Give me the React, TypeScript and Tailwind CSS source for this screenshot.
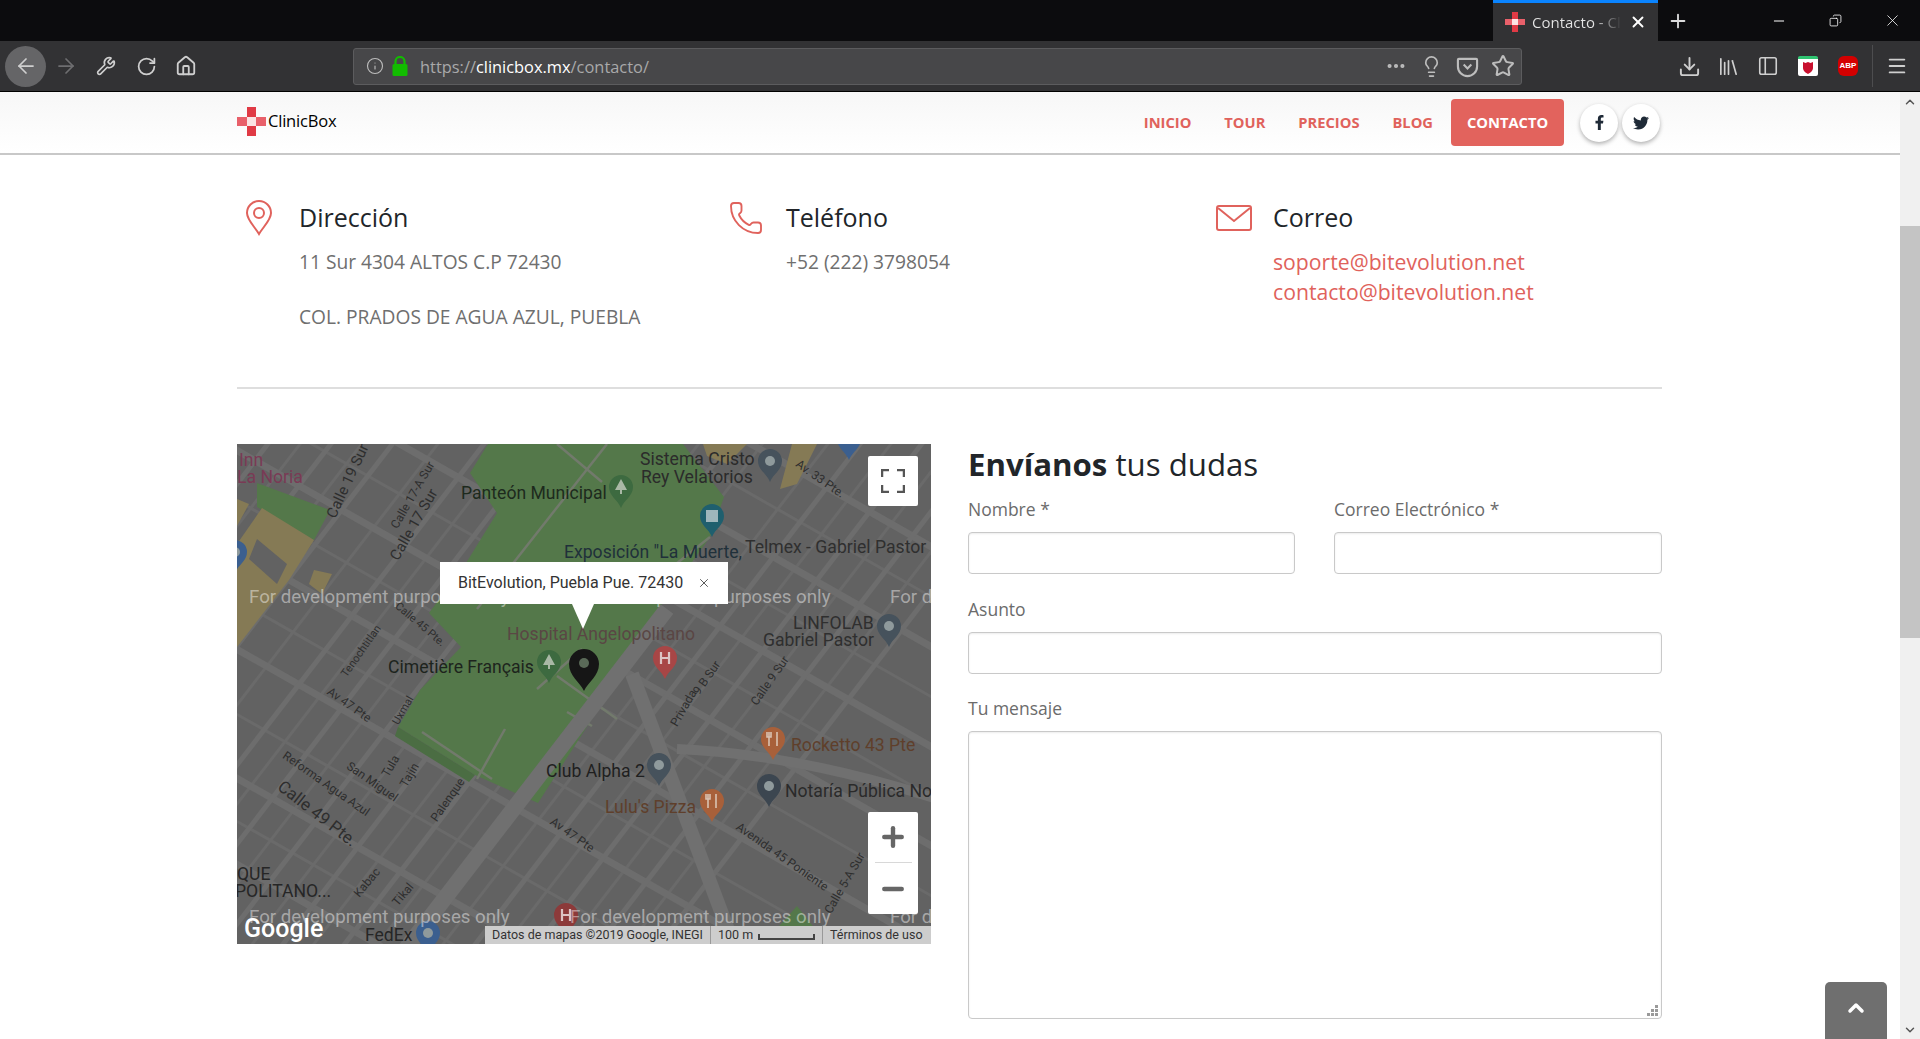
import { ArrowLeft, ArrowRight, Wrench, RotateCw, Home, Info, Ellipsis, Lightbulb, Star, Download, Library, PanelLeft, Menu, X, Plus, Minus, Copy, ChevronUp, ChevronDown, Phone } from "lucide-react";
import { FaFacebookF, FaTwitter } from "react-icons/fa";

const aRoads = [-293, -193, -93, 6, 106, 205, 334, 420];
const bRoads = [40, 122, 202, 321, 400, 480, 560, 640, 810, 890, 970, 1050];
const minorA = [-243, -143, -43, 56, 156, 270, 377];
const minorB = [82, 162, 261, 360, 440, 520, 600, 683, 768, 850, 930, 1010];

const labels = [
  { t: "Inn", x: 2, y: 22, c: "#7a3a55" },
  { t: "La Noria", x: 0, y: 39, c: "#7a3a55" },
  { t: "Sistema Cristo", x: 403, y: 21, c: "#2b2b2b" },
  { t: "Rey Velatorios", x: 404, y: 39, c: "#2b2b2b" },
  { t: "Panteón Municipal", x: 224, y: 55, c: "#1d2a1d" },
  { t: 'Exposición "La Muerte,', x: 327, y: 114, c: "#20303a" },
  { t: "Telmex - Gabriel Pastor", x: 508, y: 109, c: "#2f2f2f" },
  { t: "Hospital Angelopolitano", x: 270, y: 196, c: "#5a4644" },
  { t: "LINFOLAB", x: 556, y: 185, c: "#2f2f2f" },
  { t: "Gabriel Pastor", x: 526, y: 202, c: "#2f2f2f" },
  { t: "Cimetière Français", x: 151, y: 229, c: "#1d241d" },
  { t: "Club Alpha 2", x: 309, y: 333, c: "#1f1f1f" },
  { t: "Rocketto 43 Pte", x: 554, y: 307, c: "#5f3f2b" },
  { t: "Notaría Pública No", x: 548, y: 353, c: "#2a2a2a" },
  { t: "Lulu's Pizza", x: 368, y: 369, c: "#5f3f2b" },
  { t: "QUE", x: 0, y: 436, c: "#262626" },
  { t: "POLITANO...", x: -2, y: 453, c: "#262626" },
  { t: "FedEx", x: 128, y: 497, c: "#262626" },
];

const streets = [
  { t: "Calle 19 Sur", x: 115, y: 39, r: -65, s: 15 },
  { t: "Calle 17-A Sur", x: 179, y: 53, r: -60, s: 12 },
  { t: "Calle 17 Sur", x: 181, y: 83, r: -60, s: 15 },
  { t: "Av. 33 Pte.", x: 581, y: 38, r: 35, s: 12 },
  { t: "Tenochtitlan", x: 127, y: 209, r: -55, s: 11 },
  { t: "Calle 45 Pte.", x: 181, y: 183, r: 40, s: 11 },
  { t: "Av 47 Pte", x: 110, y: 264, r: 35, s: 12 },
  { t: "Uxmal", x: 169, y: 268, r: -60, s: 11 },
  { t: "Reforma Agua Azul", x: 87, y: 343, r: 35, s: 12 },
  { t: "San Miguel", x: 133, y: 341, r: 35, s: 12 },
  { t: "Tula", x: 157, y: 324, r: -60, s: 12 },
  { t: "Tajín", x: 176, y: 333, r: -60, s: 12 },
  { t: "Palenque", x: 214, y: 358, r: -55, s: 12 },
  { t: "Calle 49 Pte.", x: 77, y: 374, r: 38, s: 17 },
  { t: "Kabac", x: 133, y: 441, r: -50, s: 12 },
  { t: "Tikal", x: 169, y: 453, r: -50, s: 12 },
  { t: "Av 47 Pte", x: 333, y: 394, r: 35, s: 12 },
  { t: "Avenida 45 Poniente", x: 543, y: 416, r: 35, s: 12 },
  { t: "Calle 5-A Sur", x: 611, y: 441, r: -60, s: 12 },
  { t: "Privada", x: 450, y: 266, r: -60, s: 12 },
  { t: "9 B Sur", x: 473, y: 236, r: -55, s: 12 },
  { t: "Calle 9 Sur", x: 536, y: 239, r: -55, s: 12 },
];

const pins = [
  { x: 533, y: 38, c: "#46525c", k: "dot" },
  { x: 384, y: 64, c: "#3d6a40", k: "tree" },
  { x: 475, y: 93, c: "#1f5f6e", k: "museum" },
  { x: 652, y: 203, c: "#46525c", k: "dot" },
  { x: 312, y: 239, c: "#3d6a40", k: "tree" },
  { x: 428, y: 235, c: "#a84646", k: "h" },
  { x: 422, y: 342, c: "#46525c", k: "dot" },
  { x: 536, y: 316, c: "#a8603a", k: "food" },
  { x: 475, y: 378, c: "#a8603a", k: "food" },
  { x: 532, y: 363, c: "#3c4650", k: "dot" },
  { x: -2, y: 129, c: "#3b5f8f", k: "dot" },
  { x: 191, y: 510, c: "#3b5f8f", k: "dot" },
  { x: 612, y: 16, c: "#3b5f8f", k: "dot" },
  { x: 329, y: 492, c: "#8c3a3a", k: "h" },
];

function Cross({ big }: { big?: boolean }) {
  return (
    <div className={big ? "grid grid-cols-3 w-[29px] h-[29px] shrink-0" : "grid grid-cols-3 w-[20px] h-[20px] shrink-0"}>
      <div />
      <div className="bg-[#e03a45]" />
      <div />
      <div className="bg-[#e8606a]" />
      <div className="bg-[#fbe3e3]" />
      <div className="bg-[#e8606a]" />
      <div />
      <div className="bg-[#e03a45]" />
      <div />
    </div>
  );
}

function PinGlyph({ x, y, k }: { x: number; y: number; k: string }) {
  const cy = y - 21;
  if (k === "tree") return <path d={`M${x} ${cy - 8}l6 11h-5v4h-2v-4h-5z`} fill="#a9b8a6" />;
  if (k === "museum") return <rect x={x - 6} y={cy - 6} width="12" height="12" fill="#9fb6bc" />;
  if (k === "food") return <path d={`M${x - 4} ${cy - 7}v14M${x + 4} ${cy - 7}v14M${x - 6} ${cy - 7}v5h4v-5`} stroke="#d9c2b2" strokeWidth="1.6" fill="none" />;
  if (k === "h") return <path d={`M${x - 4} ${cy - 6}v12M${x + 4} ${cy - 6}v12M${x - 4} ${cy}h8`} stroke="#dcc4c4" strokeWidth="2.2" fill="none" />;
  return <circle cx={x} cy={cy} r="5" fill="#8f9a9c" />;
}

function MapDrawing() {
  return (
    <svg viewBox="0 0 694 500" className="w-full h-full block font-[Roboto,sans-serif]">
      <rect width="694" height="500" fill="#626262" />
      {minorA.map((c) => (
        <line key={c} x1="-20" y1={c - 11} x2="714" y2={c + 407} stroke="#6a6a6a" strokeWidth="3" />
      ))}
      {minorB.map((d) => (
        <line key={d} x1={(d + 20) / 1.3} y1="-20" x2={(d - 520) / 1.3} y2="520" stroke="#6a6a6a" strokeWidth="3" />
      ))}
      {aRoads.map((c) => (
        <line key={c} x1="-20" y1={c - 11} x2="714" y2={c + 407} stroke="#6d6d6d" strokeWidth="7" />
      ))}
      {bRoads.map((d) => (
        <line key={d} x1={(d + 20) / 1.3} y1="-20" x2={(d - 520) / 1.3} y2="520" stroke="#6d6d6d" strokeWidth="5" />
      ))}
      <polygon points="20,39 93,66 77,96 20,63" fill="#54784a" />
      <polygon points="25,64 77,96 52,136 0,203 0,100" fill="#857a55" />
      <polygon points="20,95 50,120 40,140 12,115" fill="#626262" />
      <polygon points="0,55 12,60 0,82" fill="#857a55" />
      <polygon points="77,126 95,130 85,150 72,140" fill="#857a55" />
      <polygon points="466,0 510,0 490,20 470,12" fill="#857a55" />
      <polygon points="555,0 580,0 560,40 543,45" fill="#857a55" />
      <polygon points="251,0 446,0 487,53 473,93 423,163 369,253 301,359 238,331 161,283 183,246 224,203 192,169 229,119 260,69 233,29" fill="#54784a" />
      <polygon points="161,283 238,331 232,338 158,292" fill="#4b6d43" />
      <polygon points="535,490 560,462 590,500 535,500" fill="#54784a" />
      <g stroke="#727a6c" strokeWidth="2.5" fill="none">
        <line x1="370" y1="0" x2="240" y2="165" />
        <line x1="320" y1="0" x2="365" y2="38" />
        <line x1="473" y1="93" x2="420" y2="135" />
        <line x1="320" y1="232" x2="380" y2="275" />
        <line x1="300" y1="245" x2="345" y2="205" />
        <line x1="185" y1="288" x2="255" y2="335" />
        <line x1="268" y1="285" x2="240" y2="335" />
        <line x1="330" y1="268" x2="355" y2="282" />
      </g>
      <line x1="430" y1="165" x2="165" y2="510" stroke="#707070" strokeWidth="16" />
      <line x1="395" y1="230" x2="500" y2="510" stroke="#707070" strokeWidth="14" />
      <path d="M440 305Q560 310 700 355" stroke="#707070" strokeWidth="10" fill="none" />
      {streets.map((s) => (
        <text key={s.t + s.x} x={s.x} y={s.y} fontSize={s.s} fill="#2e2e2e" textAnchor="middle" transform={`rotate(${s.r} ${s.x} ${s.y})`}>
          {s.t}
        </text>
      ))}
      {pins.map((p) => (
        <g key={p.x + "-" + p.y}>
          <path d={`M${p.x} ${p.y}c-3 -8 -12 -12 -12 -21a12 12 0 1 1 24 0c0 9 -9 13 -12 21z`} fill={p.c} />
          <PinGlyph x={p.x} y={p.y} k={p.k} />
        </g>
      ))}
      <path d="M347 247c-4 -9 -15 -15 -15 -27a15 15 0 1 1 30 0c0 12 -11 18 -15 27z" fill="#161616" />
      <circle cx="347" cy="219" r="5" fill="#5a6a58" />
      {labels.map((l) => (
        <text key={l.t} x={l.x} y={l.y} fontSize="17.6" fill={l.c}>
          {l.t}
        </text>
      ))}
      {[[12, 159], [333, 159], [653, 159], [12, 479], [333, 479], [653, 479]].map(([x, y]) => (
        <text key={x + "-" + y} x={x} y={y} fontSize="18.7" fill="#ffffff" fillOpacity="0.45">
          For development purposes only
        </text>
      ))}
      <text x="7" y="493" fontSize="25" fontWeight="500" fill="#ffffff">Google</text>
    </svg>
  );
}

function GoogleMap() {
  return (
    <div className="relative w-[694px] h-[500px] overflow-hidden shrink-0">
      <MapDrawing />
      <div className="absolute left-[203px] top-[118px] w-[288px] h-[42px] bg-white flex items-center pl-[18px] pr-[17px] justify-between text-[16px] text-[#333] font-[Roboto,sans-serif]">
        <span className="whitespace-nowrap">BitEvolution, Puebla Pue. 72430</span>
        <X size={14} strokeWidth={1.5} className="text-[#444]" />
      </div>
      <div className="absolute left-[335px] top-[160px] w-0 h-0 border-l-[11px] border-r-[11px] border-t-[25px] border-l-transparent border-r-transparent border-t-white" />
      <div className="absolute left-[631px] top-[12px] w-[50px] h-[50px] bg-white rounded-[2px] flex items-center justify-center">
        <svg width="24" height="24" viewBox="0 0 24 24" fill="none" stroke="#555" strokeWidth="2.5">
          <path d="M1 8V1h7M16 1h7v7M23 16v7h-7M8 23H1v-7" />
        </svg>
      </div>
      <div className="absolute left-[631px] top-[368px] w-[50px] h-[102px] bg-white rounded-[2px] flex flex-col items-center">
        <div className="h-[50px] flex items-center justify-center">
          <Plus size={30} strokeWidth={3.5} className="text-[#666]" />
        </div>
        <div className="w-[37px] h-px bg-[#d8d8d8]" />
        <div className="h-[51px] flex items-center justify-center">
          <Minus size={30} strokeWidth={3.5} className="text-[#666]" />
        </div>
      </div>
      <div className="absolute right-0 bottom-0 h-[18px] w-[446px] bg-[#cdcdcd] flex items-center text-[12.5px] text-[#333] font-[Roboto,sans-serif] whitespace-nowrap">
        <span className="pl-[7px] w-[225px]">Datos de mapas ©2019 Google, INEGI</span>
        <div className="w-px h-full bg-[#999]" />
        <span className="pl-[7px] w-[47px]">100 m</span>
        <div className="w-[57px] h-[6px] border-2 border-t-0 border-[#444] mb-[-4px]" />
        <div className="w-px h-full bg-[#999] ml-[7px]" />
        <span className="pl-[7px]">Términos de uso</span>
      </div>
    </div>
  );
}

function BrowserChrome() {
  return (
    <div className="shrink-0">
      <div className="h-[41px] bg-[#0c0c0e] flex justify-end text-white">
        <div className="w-[165px] bg-[#323234] border-t-[3px] border-[#0a84ff] flex items-center pl-[12px] gap-[7px]">
          <Cross />
          <span className="w-[90px] overflow-hidden whitespace-nowrap text-[15px] font-['Open_Sans',sans-serif] bg-gradient-to-r from-[#e6e6e6] from-[68%] to-transparent bg-clip-text text-transparent">Contacto - Clinic</span>
          <X size={18} strokeWidth={2.5} />
        </div>
        <div className="w-[40px] flex items-center justify-center">
          <Plus size={22} strokeWidth={2} className="text-[#ddd]" />
        </div>
        <div className="w-[57px] flex items-center justify-center ml-[52px]">
          <Minus size={16} strokeWidth={1.5} />
        </div>
        <div className="w-[57px] flex items-center justify-center">
          <Copy size={13} strokeWidth={1.5} className="scale-x-[-1]" />
        </div>
        <div className="w-[56px] flex items-center justify-center">
          <X size={19} strokeWidth={1} />
        </div>
      </div>
      <div className="h-[51px] bg-[#323234] border-b border-black flex items-center text-[#cfcfcf] pl-[5px]">
        <div className="w-[41px] h-[41px] rounded-full bg-[#656567] flex items-center justify-center">
          <ArrowLeft size={24} strokeWidth={1.75} />
        </div>
        <div className="w-[40px] flex justify-center text-[#6e6e70]"><ArrowRight size={24} strokeWidth={1.75} /></div>
        <div className="w-[40px] flex justify-center"><Wrench size={20} strokeWidth={2} /></div>
        <div className="w-[40px] flex justify-center"><RotateCw size={21} strokeWidth={2} /></div>
        <div className="w-[40px] flex justify-center"><Home size={22} strokeWidth={2} /></div>
        <div className="ml-[147px] w-[1169px] h-[37px] bg-[#474749] border border-[#5c5c5e] rounded-[3px] flex items-center pl-[12px]">
          <Info size={18} strokeWidth={1.5} className="text-[#bdbdbd]" />
          <svg width="16" height="20" viewBox="0 0 16 20" className="ml-[8px]">
            <rect x="0.5" y="8" width="15" height="12" rx="1.5" fill="#12bc00" />
            <path d="M3.5 9V5.5a4.5 4.5 0 0 1 9 0V9" fill="none" stroke="#12bc00" strokeWidth="2.2" />
          </svg>
          <span className="ml-[12px] mt-[2px] text-[16.4px] text-[#a9a9aa] font-['Open_Sans',sans-serif] whitespace-nowrap">
            https://<span className="text-white">clinicbox.mx</span>/contacto/
          </span>
          <div className="ml-auto flex items-center text-[#bdbdbd]">
            <div className="w-[36px] flex justify-center"><Ellipsis size={22} strokeWidth={2.5} /></div>
            <div className="w-[35px] flex justify-center"><Lightbulb size={23} strokeWidth={1.75} /></div>
            <div className="w-[36px] flex justify-center">
              <svg width="23" height="23" viewBox="0 0 24 24" fill="none" stroke="currentColor" strokeWidth="2.2">
                <path d="M3 4h18a1 1 0 0 1 1 1v7a10 10 0 0 1-20 0V5a1 1 0 0 1 1-1z" />
                <path d="M8 10l4 4 4-4" />
              </svg>
            </div>
            <div className="w-[36px] flex justify-center"><Star size={24} strokeWidth={2} /></div>
          </div>
        </div>
        <div className="ml-[147px] flex items-center">
          <div className="w-[40px] flex justify-center"><Download size={23} strokeWidth={2} /></div>
          <div className="w-[39px] flex justify-center"><Library size={23} strokeWidth={1.75} /></div>
          <div className="w-[40px] flex justify-center"><PanelLeft size={22} strokeWidth={1.75} /></div>
          <div className="w-[40px] flex justify-center">
            <div className="w-[20px] h-[20px] bg-white border-t-[3px] border-[#2fc471] rounded-[2px] flex items-center justify-center">
              <svg width="12" height="13" viewBox="0 0 12 13"><path d="M1 1l2.5 1L6 1l2.5 1L11 1v6c0 3-3 5-5 6-2-1-5-3-5-6z" fill="#c8102e" /></svg>
            </div>
          </div>
          <div className="w-[40px] flex justify-center">
            <div className="w-[20px] h-[20px] rounded-[6px] bg-[#d40000] flex items-center justify-center text-white text-[8px] font-bold font-['Liberation_Sans',sans-serif]">ABP</div>
          </div>
          <div className="w-px h-[42px] bg-[#4d4d4f] ml-[4px]" />
          <div className="w-[47px] flex justify-center"><Menu size={22} strokeWidth={2} /></div>
        </div>
      </div>
    </div>
  );
}

function Field({ label, className }: { label: string; className?: string }) {
  return (
    <div className={className}>
      <label className="block h-[26px] leading-[26px] text-[17.5px] text-[#6b6b6b]">{label}</label>
      <input className="block mt-[10px] w-full h-[42px] bg-white border border-[#c9c9c9] rounded-[4px] shadow-[inset_0_1px_2px_rgba(0,0,0,0.08)] outline-none" />
    </div>
  );
}

export default function App() {
  return (
    <div className="h-[1039px] w-[1920px] overflow-hidden flex flex-col bg-white font-['Open_Sans',sans-serif] relative">
      <BrowserChrome />
      <div className="flex flex-1 min-h-0">
        <div className="w-[1900px]">
          <div className="h-[63px] bg-gradient-to-b from-[#f7f7f7] to-white border-b-2 border-[#c8c8c8] pl-[237px] pr-[240px] flex items-center">
            <div className="flex items-center gap-[2px] -mt-[2px]">
              <Cross big />
              <span className="text-[16.5px] text-black tracking-[-0.2px]">ClinicBox</span>
            </div>
            <nav className="ml-auto flex items-center text-[14.7px] font-bold text-[#e0625c]">
              <a className="mr-[33px]">INICIO</a>
              <a className="mr-[33px]">TOUR</a>
              <a className="mr-[33px]">PRECIOS</a>
              <a className="mr-[18px]">BLOG</a>
              <a className="w-[113px] h-[47px] bg-[#e2635d] text-white rounded-[4px] flex items-center justify-center">CONTACTO</a>
              <span className="ml-[16px] w-[38px] h-[38px] rounded-full bg-white shadow-[0_2px_4px_rgba(0,0,0,0.3)] flex items-center justify-center text-[#1f2a37]"><FaFacebookF size={15} /></span>
              <span className="ml-[4px] w-[38px] h-[38px] rounded-full bg-white shadow-[0_2px_4px_rgba(0,0,0,0.3)] flex items-center justify-center text-[#1f2a37]"><FaTwitter size={16} /></span>
            </nav>
          </div>

          <div className="pl-[237px] w-[1662px]">
            <div className="pt-[45px] pb-[55px] border-b-2 border-[#dedede] grid grid-cols-[487px_487px_1fr]">
              <div className="flex">
                <div className="w-[62px] shrink-0 pl-[8px]">
                  <svg width="28" height="36" viewBox="0 0 28 36" fill="none" stroke="#e0625c" strokeWidth="2">
                    <path d="M14 34C10 27 2 20 2 13a12 12 0 0 1 24 0c0 7-8 14-12 21z" />
                    <circle cx="14" cy="13" r="5" />
                  </svg>
                </div>
                <div>
                  <h3 className="h-[36px] leading-[35px] text-[25px] text-[#212529]">Dirección</h3>
                  <p className="mt-[11px] leading-[30px] text-[19.2px] text-[#6f6f6f]">11 Sur 4304 ALTOS C.P 72430</p>
                  <p className="mt-[25px] leading-[30px] text-[19.2px] text-[#6f6f6f]">COL. PRADOS DE AGUA AZUL, PUEBLA</p>
                </div>
              </div>
              <div className="flex">
                <div className="w-[62px] shrink-0 pl-[4px]">
                  <Phone size={36} strokeWidth={1.25} className="text-[#e0625c]" />
                </div>
                <div>
                  <h3 className="h-[36px] leading-[35px] text-[25px] text-[#212529]">Teléfono</h3>
                  <p className="mt-[11px] leading-[30px] text-[19.2px] text-[#6f6f6f]">+52 (222) 3798054</p>
                </div>
              </div>
              <div className="flex">
                <div className="w-[62px] shrink-0 pl-[5px]">
                  <svg width="36" height="36" viewBox="0 0 36 36" fill="none" stroke="#e0625c" strokeWidth="2">
                    <rect x="1" y="6" width="34" height="24" rx="2" />
                    <path d="M2 8l16 13L34 8" />
                  </svg>
                </div>
                <div>
                  <h3 className="h-[36px] leading-[35px] text-[25px] text-[#212529]">Correo</h3>
                  <a className="block mt-[11px] leading-[30px] text-[21.2px] text-[#e0625c]">soporte@bitevolution.net</a>
                  <a className="block leading-[30px] text-[21.2px] text-[#e0625c]">contacto@bitevolution.net</a>
                </div>
              </div>
            </div>

            <div className="mt-[55px] flex gap-[37px]">
              <GoogleMap />
              <form className="flex-1">
                <h2 className="h-[42px] leading-[40px] text-[31.2px] text-[#212529] whitespace-nowrap"><b className="font-bold">Envíanos</b> tus dudas</h2>
                <div className="mt-[10px] grid grid-cols-[327px_328px] gap-x-[39px]">
                  <Field label="Nombre *" />
                  <Field label="Correo Electrónico *" />
                </div>
                <Field label="Asunto" className="mt-[22px]" />
                <div className="mt-[21px]">
                  <label className="block h-[26px] leading-[26px] text-[17.5px] text-[#6b6b6b]">Tu mensaje</label>
                  <div className="relative mt-[10px]">
                    <textarea className="block w-full h-[288px] resize-none bg-white border border-[#c9c9c9] rounded-[4px] shadow-[inset_0_1px_2px_rgba(0,0,0,0.08)] outline-none" />
                    <svg width="12" height="12" viewBox="0 0 12 12" className="absolute right-[3px] bottom-[2px]" fill="#9a9a9a">
                      <path d="M8 0h3v3H8zM4 4h3v3H4zM8 4h3v3H8zM0 8h3v3H0zM4 8h3v3H4zM8 8h3v3H8z" />
                    </svg>
                  </div>
                </div>
              </form>
            </div>
          </div>
        </div>

        <div className="w-[20px] bg-[#f0f0f0] flex flex-col items-center">
          <div className="h-[19px] flex items-center justify-center"><ChevronUp size={14} strokeWidth={2.5} className="text-[#555]" /></div>
          <div className="mt-[115px] w-full h-[412px] bg-[#c4c4c4]" />
          <div className="mt-auto h-[19px] flex items-center justify-center"><ChevronDown size={14} strokeWidth={2.5} className="text-[#555]" /></div>
        </div>
      </div>

      <div className="absolute left-[1825px] top-[982px] w-[62px] h-[57px] bg-[#6f6f6f] rounded-t-[5px] flex justify-center pt-[14px]">
        <ChevronUp size={24} strokeWidth={3.5} className="text-white" />
      </div>
    </div>
  );
}
